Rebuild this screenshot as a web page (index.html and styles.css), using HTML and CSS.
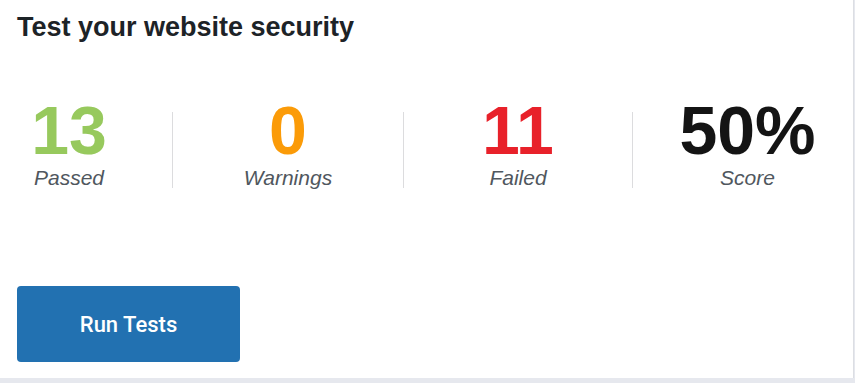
FILE: index.html
```html
<!DOCTYPE html>
<html lang="en">
<head>
<meta charset="utf-8">
<title>Test your website security</title>
<link rel="stylesheet" href="styles.css">
</head>
<body>
<div class="card">
  <h2 class="card-title">Test your website security</h2>
  <div class="stats">
    <div class="stat stat-first">
      <div class="stat-value passed">13</div>
      <div class="stat-label">Passed</div>
    </div>
    <div class="divider"></div>
    <div class="stat">
      <div class="stat-value warnings">0</div>
      <div class="stat-label">Warnings</div>
    </div>
    <div class="divider"></div>
    <div class="stat stat-third">
      <div class="stat-value failed">11</div>
      <div class="stat-label">Failed</div>
    </div>
    <div class="divider"></div>
    <div class="stat stat-last">
      <div class="stat-value score">50%</div>
      <div class="stat-label">Score</div>
    </div>
  </div>
  <button class="run-btn" type="button">Run Tests</button>
</div>
</body>
</html>
```

FILE: styles.css
```css
* { box-sizing: border-box; }
html, body { margin: 0; padding: 0; }
body {
  background: #e6e8ee;
  font-family: "Liberation Sans", Arial, sans-serif;
  width: 855px;
  height: 383px;
  overflow: hidden;
}
.card {
  width: 854px;
  height: 378px;
  background: #fff;
  border-right: 1px solid #dcdee3;
  padding: 12px 0 0 17px;
  display: flex;
  flex-direction: column;
  align-items: flex-start;
}
.card-title {
  margin: 0;
  font-size: 27px;
  line-height: 31px;
  font-weight: 700;
  color: #1d2327;
}
.stats {
  display: flex;
  align-items: flex-start;
  width: 853px;
  margin-top: 53px;
  margin-left: -17px;
}
.stat {
  flex: 0 0 230px;
  text-align: center;
}
.stat-first {
  flex-basis: 172px;
  padding-right: 34px;
}
.stat-third {
  flex-basis: 228px;
}
.stat-last {
  flex: 1 1 auto;
  padding-left: 9px;
}
.stat-value {
  font-size: 68px;
  line-height: 68px;
  font-weight: 700;
}
.passed { color: #97c95d; }
.warnings { color: #fb9b08; }
.failed { color: #e8212a; }
.score { color: #141414; }
.stat-label {
  margin-top: 2px;
  font-size: 21px;
  line-height: 24px;
  font-style: italic;
  color: #50575e;
}
.divider {
  flex: 0 0 1px;
  height: 76px;
  margin-top: 16px;
  background: #dcdcde;
}
.run-btn {
  margin-top: 96px;
  width: 223px;
  height: 76px;
  border: 0;
  border-radius: 4px;
  background: #2271b1;
  color: #fff;
  font-family: Roboto, "Liberation Sans", Arial, sans-serif;
  font-weight: 500;
  font-size: 22px;
  padding: 0;
}
```
